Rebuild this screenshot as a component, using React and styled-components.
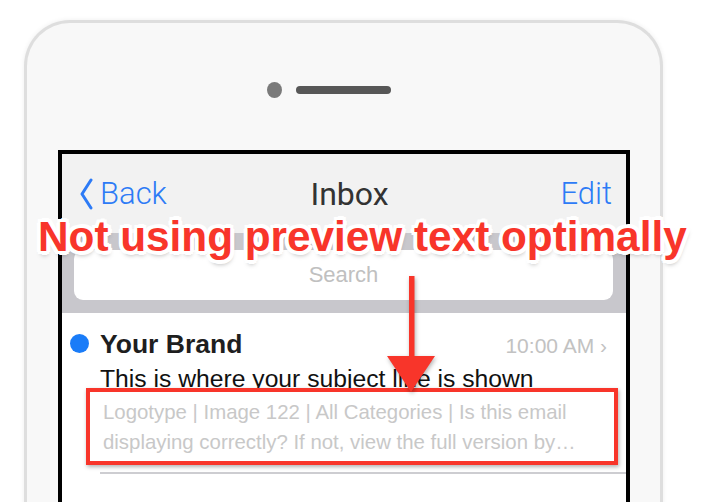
import React from "react";
import styled, { createGlobalStyle } from "styled-components";

const Global = createGlobalStyle`
  html, body { margin: 0; padding: 0; background: #ffffff; }
  body { font-family: "Liberation Sans", Arial, sans-serif; }
`;

const Page = styled.div`
  position: relative;
  width: 711px;
  height: 502px;
  overflow: hidden;
  background: #ffffff;
`;

const Phone = styled.div`
  box-sizing: border-box;
  margin: 20px 0 0 24px;
  width: 639px;
  height: 600px;
  border: 3px solid #dedede;
  border-bottom: none;
  border-radius: 46px 46px 0 0;
  background: #f8f8f8;
  box-shadow: 0 0 5px rgba(0, 0, 0, 0.07);
  padding-top: 59px;
  display: flex;
  flex-direction: column;
`;

const SpeakerRow = styled.div`
  display: grid;
  grid-template-columns: 1fr auto 1fr;
  align-items: center;
  height: 16px;
  margin-bottom: 52px;
`;

const Camera = styled.div`
  justify-self: end;
  width: 15px;
  height: 16px;
  margin-right: 14px;
  border-radius: 50%;
  background: #7a7a7a;
`;

const Slot = styled.div`
  width: 95px;
  height: 8px;
  border-radius: 4px;
  background: #575757;
`;

const Screen = styled.div`
  flex: 1;
  margin: 0 30px 0 31px;
  border: 4px solid #000;
  border-bottom: none;
  background: #ffffff;
  display: flex;
  flex-direction: column;
`;

const NavBar = styled.div`
  height: 79px;
  background: #f2f2f2;
  display: grid;
  grid-template-columns: 1fr auto 1fr;
  align-items: center;
  padding: 0 14px 0 17px;
`;

const NavButton = styled.div`
  display: flex;
  align-items: center;
  justify-self: ${(p) => (p.$end ? "end" : "start")};
  font-family: Roboto, "Liberation Sans", sans-serif;
  font-weight: 300;
  font-size: 31px;
  line-height: 1;
  color: #2d7bf6;
`;

const Chevron = styled.svg`
  width: 14px;
  height: 32px;
  margin-right: 7px;
`;

const Title = styled.div`
  font-family: Roboto, "Liberation Sans", sans-serif;
  font-weight: 400;
  font-size: 32px;
  line-height: 1;
  color: #333;
  padding-left: 8px;
`;

const SearchBand = styled.div`
  height: 80px;
  box-sizing: border-box;
  background: #c8c7cc;
  padding: 17px 13px 13px 12px;
  display: flex;
`;

const SearchField = styled.div`
  flex: 1;
  background: #fff;
  border-radius: 9px;
  display: flex;
  align-items: center;
  justify-content: center;
  font-size: 22px;
  color: #c0c0c0;
`;

const Row = styled.div`
  display: grid;
  grid-template-columns: 20px 1fr;
  column-gap: 10px;
  padding: 16px 19px 0 8px;
`;

const Dot = styled.div`
  width: 19px;
  height: 19px;
  border-radius: 50%;
  background: #1a7cf8;
  margin-top: 5px;
`;

const Body = styled.div`
  display: flex;
  flex-direction: column;
`;

const Header = styled.div`
  display: flex;
  justify-content: space-between;
  align-items: baseline;
  height: 30px;
`;

const Sender = styled.div`
  font-size: 26.5px;
  line-height: 30px;
  font-weight: 700;
  color: #1e1e1e;
`;

const Time = styled.div`
  font-size: 21px;
  line-height: 30px;
  color: #c2c2c2;
  white-space: nowrap;
`;

const Subject = styled.div`
  margin-top: 3px;
  font-size: 24.7px;
  line-height: 34px;
  color: #111;
  white-space: nowrap;
`;

const Preview = styled.div`
  position: relative;
  padding: 1px 0 15px 3px;
  margin-right: -19px;
  border-bottom: 2px solid #cdcdd1;
`;

const PreviewLine = styled.div`
  font-size: 20.4px;
  line-height: 30px;
  color: #c8c8c8;
  white-space: nowrap;
`;

const Highlight = styled.div`
  position: absolute;
  left: -14px;
  top: -8px;
  width: 532px;
  height: 77px;
  box-sizing: border-box;
  border: 4px solid #f8352a;
  box-shadow: 1px 2px 4px rgba(0, 0, 0, 0.3);
`;

const Callout = styled.div`
  position: absolute;
  left: 38px;
  top: 213px;
  font-family: "Liberation Sans", Arial, sans-serif;
  font-weight: 700;
  font-size: 42.3px;
  line-height: 48px;
  color: #f8352a;
  white-space: nowrap;
  text-shadow:
    3px 0 0 #fff, -3px 0 0 #fff, 0 3px 0 #fff, 0 -3px 0 #fff,
    2px 2px 0 #fff, -2px 2px 0 #fff, 2px -2px 0 #fff, -2px -2px 0 #fff,
    4px 1px 0 #fff, -4px 1px 0 #fff, 1px 4px 0 #fff, 1px -4px 0 #fff,
    3px 3px 0 #fff, -3px 3px 0 #fff, 3px -3px 0 #fff, -3px -3px 0 #fff,
    1px 4px 5px rgba(0, 0, 0, 0.35);
`;

const Arrow = styled.svg`
  position: absolute;
  left: 380px;
  top: 270px;
  width: 64px;
  height: 130px;
  filter: drop-shadow(1px 2px 2px rgba(0, 0, 0, 0.3));
`;

export default function App() {
  return (
    <Page>
      <Global />
      <Phone>
        <SpeakerRow>
          <Camera />
          <Slot />
          <div />
        </SpeakerRow>
        <Screen>
          <NavBar>
            <NavButton>
              <Chevron viewBox="0 0 14 32">
                <polyline
                  points="12,2 3,16 12,30"
                  fill="none"
                  stroke="#2d7bf6"
                  strokeWidth="3"
                  strokeLinecap="round"
                  strokeLinejoin="round"
                />
              </Chevron>
              Back
            </NavButton>
            <Title>Inbox</Title>
            <NavButton $end>Edit</NavButton>
          </NavBar>
          <SearchBand>
            <SearchField>Search</SearchField>
          </SearchBand>
          <Row>
            <Dot />
            <Body>
              <Header>
                <Sender>Your Brand</Sender>
                <Time>10:00 AM ›</Time>
              </Header>
              <Subject>This is where your subject line is shown</Subject>
              <Preview>
                <PreviewLine>Logotype | Image 122 | All Categories | Is this email</PreviewLine>
                <PreviewLine>displaying correctly? If not, view the full version by…</PreviewLine>
                <Highlight />
              </Preview>
            </Body>
          </Row>
        </Screen>
      </Phone>
      <Callout>Not using preview text optimally</Callout>
      <Arrow viewBox="0 0 64 130">
        <rect x="29" y="6" width="5.5" height="82" fill="#f8352a" />
        <polygon points="7,86 55,86 31,122" fill="#f8352a" />
      </Arrow>
    </Page>
  );
}
